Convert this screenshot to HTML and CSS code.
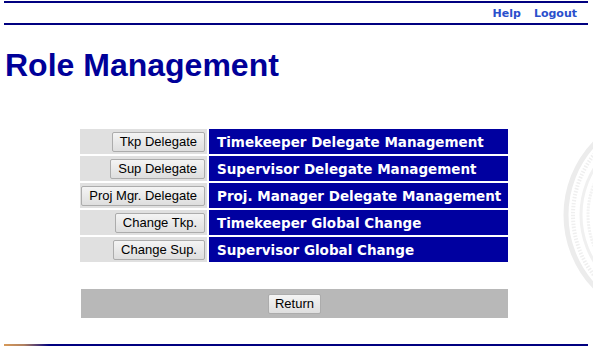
FILE: index.html
```html
<!DOCTYPE html>
<html lang="en">
<head>
    <meta charset="UTF-8">
    <title>Role Management</title>
    <link rel="stylesheet" href="styles.css">
</head>
<body>
    <div class="seal">
        <svg width="33" height="240" viewBox="0 0 33 240">
            <circle cx="110" cy="120" r="104" fill="none" stroke="#ececec" stroke-width="5"/>
            <circle cx="110" cy="120" r="97" fill="none" stroke="#efefef" stroke-width="4" stroke-dasharray="1.5 1.5"/>
            <circle cx="110" cy="120" r="89" fill="none" stroke="#f0f0f0" stroke-width="3"/>
            <circle cx="110" cy="120" r="82" fill="none" stroke="#f2f2f2" stroke-width="3" stroke-dasharray="2 1"/>
        </svg>
    </div>

    <div class="page">
        <div class="topbar">
            <a href="#">Help</a>
            <a href="#">Logout</a>
        </div>

        <h1>Role Management</h1>

        <table class="roles">
            <tr>
                <td class="action"><button>Tkp Delegate</button></td>
                <td class="label">Timekeeper Delegate Management</td>
            </tr>
            <tr>
                <td class="action"><button>Sup Delegate</button></td>
                <td class="label">Supervisor Delegate Management</td>
            </tr>
            <tr>
                <td class="action"><button>Proj Mgr. Delegate</button></td>
                <td class="label">Proj. Manager Delegate Management</td>
            </tr>
            <tr>
                <td class="action"><button>Change Tkp.</button></td>
                <td class="label">Timekeeper Global Change</td>
            </tr>
            <tr>
                <td class="action"><button>Change Sup.</button></td>
                <td class="label">Supervisor Global Change</td>
            </tr>
        </table>

        <div class="footer-bar">
            <button>Return</button>
        </div>

        <div class="bottom-line"></div>
    </div>
</body>
</html>
```

FILE: styles.css
```css
* {
    margin: 0;
    padding: 0;
    box-sizing: border-box;
}

body {
    font-family: 'Liberation Sans', Arial, sans-serif;
    background: #fff;
    width: 593px;
    height: 346px;
    overflow: hidden;
    position: relative;
}

.seal {
    position: absolute;
    left: 560px;
    top: 95px;
    width: 33px;
    overflow: hidden;
}

.page {
    position: relative;
    padding: 1px 5px 0 4px;
}

.topbar {
    border-top: 2px solid #000080;
    border-bottom: 2px solid #000080;
    height: 24px;
    display: flex;
    justify-content: flex-end;
    align-items: center;
    gap: 13px;
    padding-right: 11px;
}

.topbar a {
    font-family: 'DejaVu Sans', Verdana, sans-serif;
    font-size: 11px;
    font-weight: bold;
    color: #2a4fcc;
    text-decoration: none;
}

h1 {
    font-size: 32px;
    font-weight: bold;
    color: #000099;
    margin: 22px 0 0 1px;
    line-height: 36px;
}

.roles {
    border-spacing: 2px;
    margin: 44px 0 0 74px;
}

.roles td {
    height: 25px;
    padding: 0;
}

.action {
    background: #e0e0e0;
    text-align: right;
    width: 127px;
    padding-right: 2px !important;
}

.label {
    background: #0000a0;
    color: #fff;
    font-family: 'DejaVu Sans', Verdana, sans-serif;
    font-size: 13.5px;
    font-weight: bold;
    width: 299px;
    padding-left: 8px !important;
}

button {
    font-family: 'Liberation Sans', Arial, sans-serif;
    font-size: 13px;
    color: #000;
    background: linear-gradient(#f4f4f4, #dedede);
    border: 1px solid #acacac;
    border-radius: 2px;
    height: 20px;
    padding: 0 6px;
    vertical-align: middle;
}

.roles button {
    padding: 0 7px;
}

.footer-bar {
    background: #b8b8b8;
    width: 427px;
    height: 29px;
    margin: 25px 0 0 77px;
    display: flex;
    justify-content: center;
    align-items: center;
}

.bottom-line {
    height: 3px;
    margin-top: 26px;
    background: linear-gradient(to right, #d89a58 0, #b08060 20px, #000080 45px, #000080 100%);
}
```
